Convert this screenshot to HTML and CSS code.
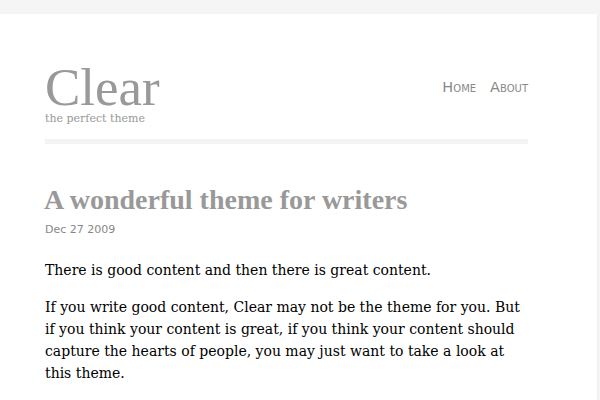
FILE: index.html
```html
<!DOCTYPE html>
<html lang="en">
<head>
    <meta charset="UTF-8">
    <title>Clear - the perfect theme</title>
    <link rel="stylesheet" href="styles.css">
</head>
<body>
    <div class="page">
        <div class="wrap">
            <div class="header">
                <div class="brand">
                    <h1 class="site-title">Clear</h1>
                    <div class="tagline">the perfect theme</div>
                </div>
                <ul class="nav">
                    <li><a href="#">Home</a></li>
                    <li><a href="#">About</a></li>
                </ul>
            </div>
            <div class="post">
                <h2 class="post-title">A wonderful theme for writers</h2>
                <div class="post-date">Dec 27 2009</div>
                <div class="post-body">
                    <p>There is good content and then there is great content.</p>
                    <p>If you write good content, Clear may not be the theme for you. But if you think your content is great, if you think your content should capture the hearts of people, you may just want to take a look at this theme.</p>
                </div>
            </div>
        </div>
    </div>
</body>
</html>
```

FILE: styles.css
```css
body {
    margin: 0;
    background: #f5f5f5;
    font-family: "DejaVu Serif", Georgia, serif;
    color: #000;
}
.page {
    margin-top: 14px;
    width: 597px;
    min-height: 400px;
    background: #fff;
    box-shadow: 1px 0 2px #eee;
}
.wrap {
    width: 483px;
    padding: 48px 0 0 45px;
}
.header {
    display: flex;
    justify-content: space-between;
    align-items: flex-start;
    border-bottom: 5px solid #f3f3f3;
    padding-bottom: 13px;
}
.site-title {
    margin: 0;
    font-family: "Liberation Serif", Georgia, serif;
    font-weight: normal;
    font-size: 53px;
    line-height: 50px;
    color: #999;
}
.tagline {
    font-family: "DejaVu Serif", serif;
    font-size: 11px;
    line-height: 14px;
    color: #999;
}
.nav {
    list-style: none;
    margin: 15px 0 0;
    padding: 0;
    display: flex;
    gap: 14px;
}
.nav a {
    font-family: "DejaVu Sans", Verdana, sans-serif;
    font-variant: small-caps;
    font-size: 14.5px;
    color: #888;
    text-decoration: none;
}
.post {
    padding-top: 41px;
}
.post-title {
    margin: 0 0 0 -1px;
    font-family: "Liberation Serif", Georgia, serif;
    font-weight: bold;
    font-size: 28px;
    line-height: 30px;
    color: #999;
}
.post-date {
    font-family: "DejaVu Sans", Verdana, sans-serif;
    font-size: 11px;
    color: #888;
    margin-top: 8px;
}
.post-body {
    margin-top: 23px;
    font-size: 14px;
    line-height: 22px;
}
.post-body p {
    margin: 0 0 15px;
}
```
